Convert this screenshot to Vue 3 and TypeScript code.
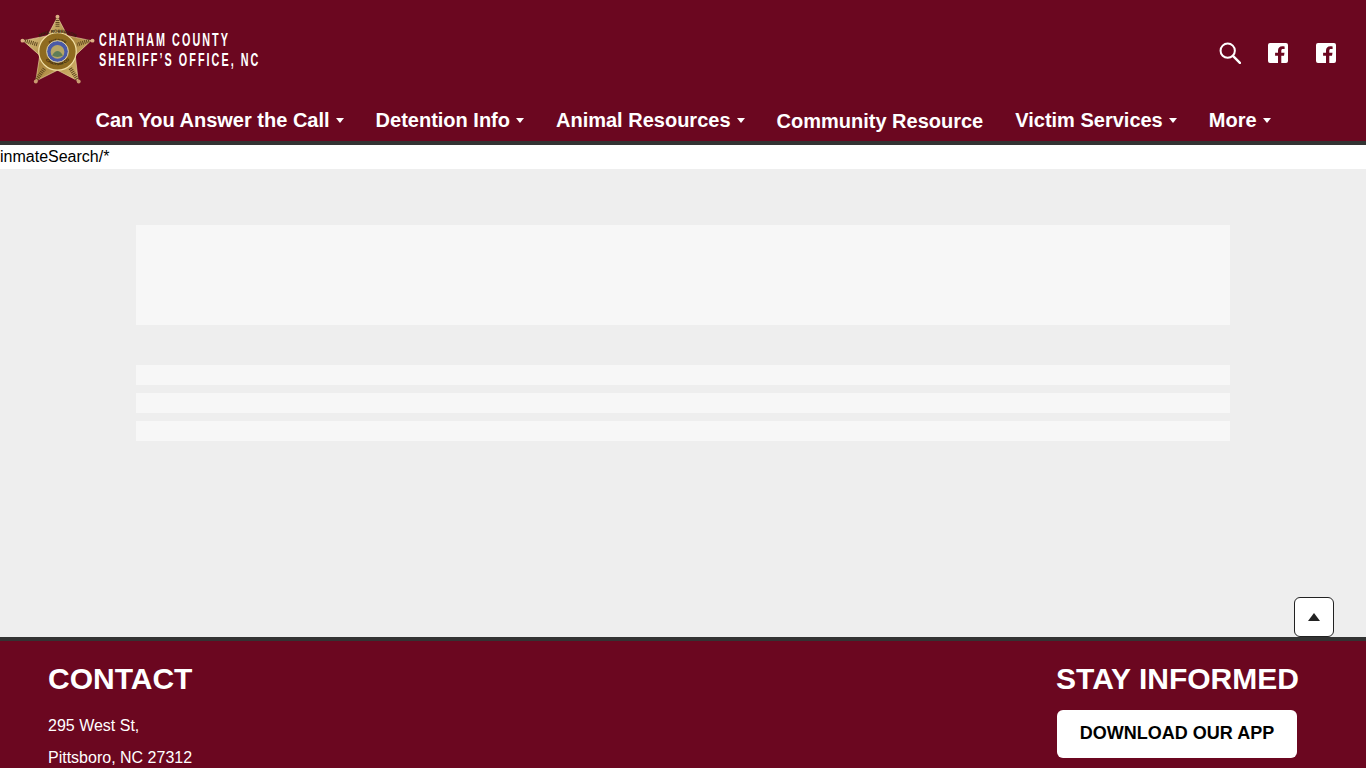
<template>
  <div class="page">
    <header class="site-header">
      <div class="top-row">
        <a class="brand" href="#">
          <svg class="badge" viewBox="0 0 76 72" width="75" height="71" aria-hidden="true">
            <defs>
              <linearGradient id="gold" x1="0" y1="0" x2="1" y2="1">
                <stop offset="0" stop-color="#f0dfa4" />
                <stop offset="0.5" stop-color="#a9843c" />
                <stop offset="1" stop-color="#e3c983" />
              </linearGradient>
              <path id="ringTop" d="M29 31 Q38 25 47 31" fill="none" />
              <path id="ringBottom" d="M26 47 Q38 57 50 47" fill="none" />
              <path id="outerTop" d="M19 24 Q38 14 57 24" fill="none" />
            </defs>
            <path class="star" d="M38 3 L48 22 L72 27 L56 42 L59 68 L38 57 L16 68 L20 42 L3 27 L28 22 Z" />
            <path d="M38 4 L38 14 M70 27 L58 31 M58 66 L51 55 M17 66 L25 55 M5 27 L18 31" stroke="#5f4720" stroke-width="4" stroke-dasharray="1 1" fill="none" />
            <circle cx="38" cy="2.800" r="2" fill="#dcae84" />
            <circle cx="2.500" cy="27" r="2" fill="#dcae84" />
            <circle cx="73.500" cy="27" r="2" fill="#dcae84" />
            <circle cx="16" cy="68.500" r="2" fill="#c99b70" />
            <circle cx="59.500" cy="68.500" r="2" fill="#c99b70" />
            <circle cx="38" cy="38" r="19" fill="#8f6b20" stroke="#f2e0a6" stroke-width="1.200" />
            <text class="seal-text outer"><textPath href="#outerTop" startOffset="50%" text-anchor="middle">MIKE ROBERSON</textPath></text>
            <text class="seal-text"><textPath href="#ringTop" startOffset="50%" text-anchor="middle">SHERIFF</textPath></text>
            <text class="seal-text"><textPath href="#ringBottom" startOffset="50%" text-anchor="middle">CHATHAM CO</textPath></text>
            <circle cx="38" cy="38" r="11" fill="#4a5aa6" stroke="#ecdca8" stroke-width="1" />
            <circle cx="38" cy="38.500" r="7" fill="#b7a666" />
            <path d="M32.500 42 Q38 33 43.500 42 Q38 45 32.500 42 Z" fill="#5f7d57" />
          </svg>
          <span class="brand-text">
            <span class="brand-line">CHATHAM COUNTY</span>
            <span class="brand-line">SHERIFF’S OFFICE, NC</span>
          </span>
        </a>
        <div class="header-icons">
          <svg class="icon-search" viewBox="0 0 24 24" width="22" height="22" aria-hidden="true">
            <circle cx="9.500" cy="9.500" r="7.800" fill="none" stroke="#fff" stroke-width="2.200" />
            <path d="M15.200 15.200 L22.800 22.800" stroke="#fff" stroke-width="2.600" stroke-linecap="round" />
          </svg>
          <svg v-for="n in 2" :key="n" viewBox="0 0 20 20" width="20" height="20" aria-hidden="true">
            <path fill="#fff" fill-rule="evenodd" d="M2 0h16A2 2 0 0 1 20 2v16a2 2 0 0 1-2 2h-4.700v-7.200h2.700l.5-3.100h-3.200V7.700c0-.9.400-1.600 1.700-1.600h1.600V3.400c-.7-.1-1.500-.2-2.300-.2-2.700 0-4.300 1.600-4.300 4.300v2.200H7.100v3.100H10V20H2A2 2 0 0 1 0 18V2A2 2 0 0 1 2 0z" />
          </svg>
        </div>
      </div>
      <nav class="main-nav">
        <a v-for="item in navItems" :key="item.label" class="nav-item" :class="{ plain: !item.caret }" href="#">
          {{ item.label }}<span v-if="item.caret" class="caret"></span>
        </a>
      </nav>
    </header>

    <div class="raw-line">inmateSearch/*</div>

    <main class="content">
      <div class="placeholder-block"></div>
      <div class="placeholder-lines">
        <div v-for="n in 3" :key="n" class="placeholder-line"></div>
      </div>
      <button class="to-top" type="button" aria-label="Back to top"><span class="to-top-arrow"></span></button>
    </main>

    <footer class="site-footer">
      <section class="contact">
        <h2>CONTACT</h2>
        <p>295 West St,</p>
        <p>Pittsboro, NC 27312</p>
      </section>
      <section class="informed">
        <h2>STAY INFORMED</h2>
        <a class="app-button" href="#">DOWNLOAD OUR APP</a>
      </section>
    </footer>
  </div>
</template>

<script setup lang="ts">
const navItems = [
  { label: 'Can You Answer the Call', caret: true },
  { label: 'Detention Info', caret: true },
  { label: 'Animal Resources', caret: true },
  { label: 'Community Resource', caret: false },
  { label: 'Victim Services', caret: true },
  { label: 'More', caret: true },
];
</script>

<style>
html, body {
  margin: 0;
  overflow: hidden;
}
</style>

<style scoped>
.page {
  height: 768px;
  overflow: hidden;
  display: flex;
  flex-direction: column;
  font-family: "Liberation Sans", Arial, sans-serif;
  background: #eee;
  color: #000;
}

.site-header {
  background: #6b0720;
  border-bottom: 4px solid #333;
  height: 145px;
  box-sizing: border-box;
  flex: none;
}

.top-row {
  height: 101px;
  display: flex;
  align-items: flex-start;
  justify-content: space-between;
  padding: 14px 30px 0 20px;
  box-sizing: border-box;
}

.brand {
  display: flex;
  align-items: center;
  color: #fff;
  text-decoration: none;
}

.badge {
  display: block;
}

.star {
  fill: url(#gold);
  stroke: #f0dfa8;
  stroke-width: 0.6;
}

.seal-text {
  font-size: 4px;
  font-weight: 700;
  fill: #2e200b;
  font-family: "Liberation Sans", sans-serif;
}

.seal-text.outer {
  font-size: 4.500px;
}

.brand-text {
  display: flex;
  flex-direction: column;
  margin-left: 4px;
  margin-top: 1px;
  width: 160px;
}

.brand-line {
  font-size: 18px;
  line-height: 20px;
  font-weight: 700;
  letter-spacing: 3.400px;
  white-space: nowrap;
  color: #fff;
  transform: scaleX(0.6);
  transform-origin: left center;
}

.header-icons {
  display: flex;
  align-items: center;
  gap: 28px;
  padding-top: 28px;
}

.icon-search {
  margin-right: -1px;
}

.main-nav {
  display: flex;
  justify-content: center;
}

.nav-item {
  display: flex;
  align-items: center;
  padding: 0 16px;
  height: 40px;
  margin-top: -1px;
  color: #fff;
  font-size: 20px;
  font-weight: 700;
  text-decoration: none;
  white-space: nowrap;
}

.nav-item.plain {
  margin-top: 0;
}

.caret {
  width: 0;
  height: 0;
  margin-left: 6px;
  margin-top: 1px;
  border-left: 4.500px solid transparent;
  border-right: 4.500px solid transparent;
  border-top: 5px solid #fff;
}

.raw-line {
  flex: none;
  height: 24px;
  background: #fff;
  font-size: 16px;
  line-height: 24px;
}

.content {
  flex: none;
  position: relative;
  height: 468px;
  box-sizing: border-box;
  padding: 56px 136px 0;
  background: #eee;
}

.placeholder-block {
  height: 100px;
  background: #f7f7f7;
}

.placeholder-lines {
  display: flex;
  flex-direction: column;
  gap: 8px;
  margin-top: 40px;
}

.placeholder-line {
  height: 20px;
  background: #f7f7f7;
}

.to-top {
  position: absolute;
  right: 32px;
  bottom: 0;
  width: 40px;
  height: 40px;
  padding: 0;
  display: flex;
  align-items: center;
  justify-content: center;
  background: #fff;
  border: 1px solid #222;
  border-radius: 6px;
}

.to-top-arrow {
  width: 0;
  height: 0;
  border-left: 6.500px solid transparent;
  border-right: 6.500px solid transparent;
  border-bottom: 8px solid #222;
}

.site-footer {
  flex: 1;
  display: flex;
  justify-content: space-between;
  box-sizing: border-box;
  padding: 0 67px 0 48px;
  background: #6b0720;
  border-top: 4px solid #333;
  color: #fff;
}

.site-footer h2 {
  margin: 20px 0 1px;
  font-size: 30px;
  line-height: 36px;
  font-weight: 700;
}

.contact p {
  margin: 0;
  font-size: 16px;
  line-height: 32px;
}

.contact h2 {
  margin-bottom: 13px;
}

.informed {
  width: 243px;
  display: flex;
  flex-direction: column;
  align-items: center;
}

.informed h2 {
  white-space: nowrap;
}

.app-button {
  display: flex;
  align-items: center;
  justify-content: center;
  width: 240px;
  height: 48px;
  box-sizing: border-box;
  padding-bottom: 2px;
  margin-top: 12px;
  margin-right: 1px;
  background: #fff;
  border-radius: 6px;
  color: #000;
  font-size: 18px;
  font-weight: 700;
  text-decoration: none;
  white-space: nowrap;
}
</style>
